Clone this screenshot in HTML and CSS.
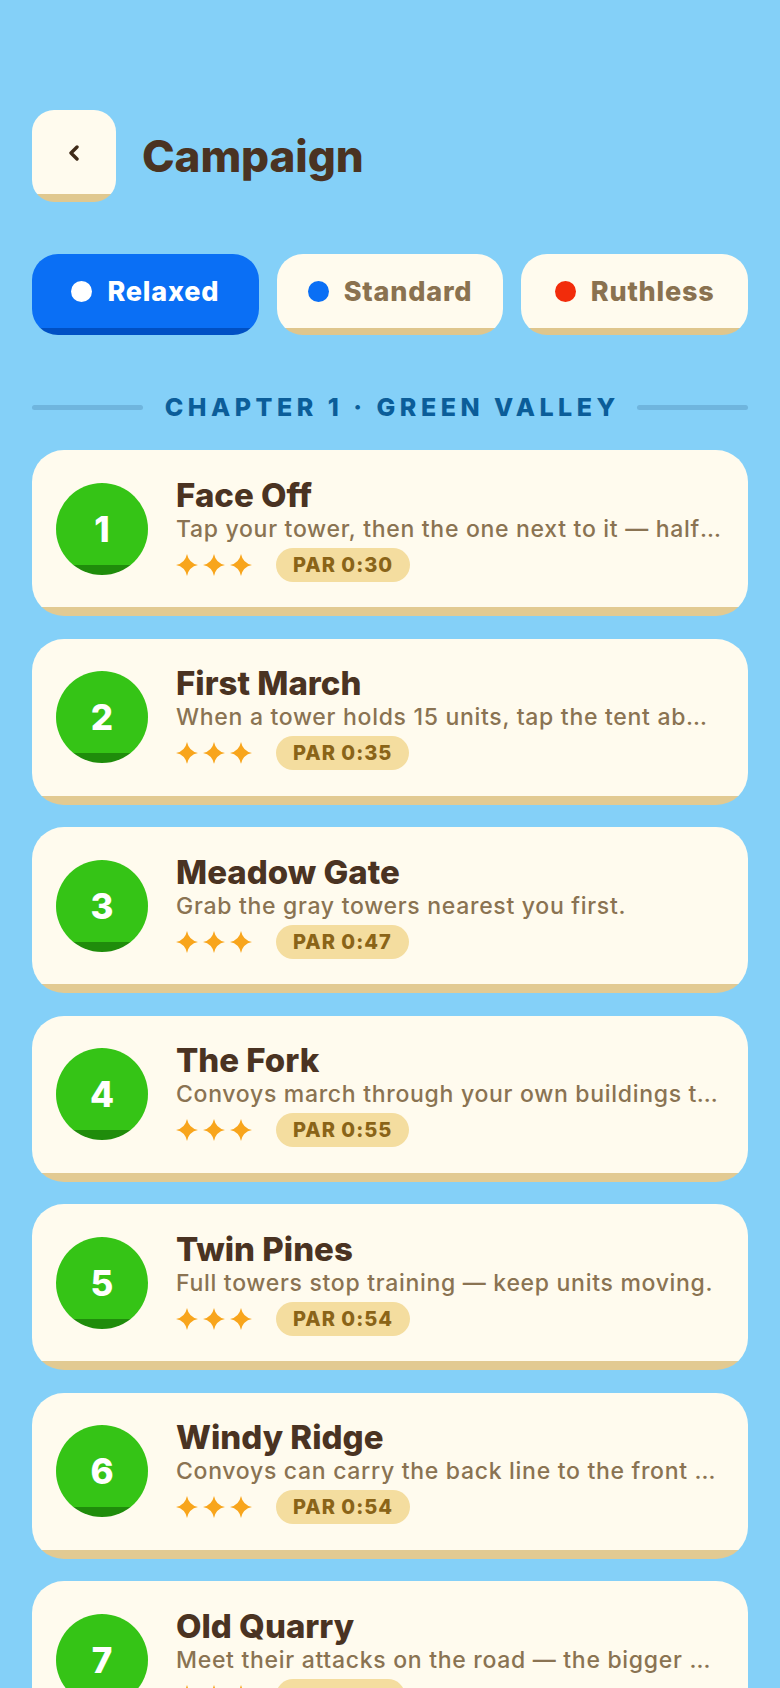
FILE: index.html
```html
<!DOCTYPE html>
<html lang="en">

<head>
    <meta charset="UTF-8">
    <meta name="viewport" content="width=device-width, initial-scale=1.0">
    <title>Campaign</title>
    <link rel="stylesheet" href="styles.css">
</head>

<body>
    <div class="screen">
        <header class="topbar">
            <button class="back-btn" aria-label="Back">
                <svg width="14" height="16" viewBox="0 0 14 16"><path d="M10 2 L4 8 L10 14" fill="none" stroke="#3f2a18" stroke-width="3.4" stroke-linecap="round" stroke-linejoin="round"/></svg>
            </button>
            <h1>Campaign</h1>
        </header>

        <div class="modes">
            <button class="mode active"><span class="dot dot-white"></span>Relaxed</button>
            <button class="mode"><span class="dot dot-blue"></span>Standard</button>
            <button class="mode"><span class="dot dot-red"></span>Ruthless</button>
        </div>

        <div class="chapter">
            <span class="chapter-line"></span>
            <span class="chapter-title">CHAPTER 1 · GREEN VALLEY</span>
            <span class="chapter-line"></span>
        </div>

        <div class="levels">
            <div class="level">
                <div class="level-num">1</div>
                <div class="level-info">
                    <div class="level-name">Face Off</div>
                    <div class="level-desc">Tap your tower, then the one next to it — half its units march over.</div>
                    <div class="level-meta">
                        <span class="stars"><svg viewBox="0 0 24 24"><path d="M12 0 Q14 10 24 12 Q14 14 12 24 Q10 14 0 12 Q10 10 12 0Z"/></svg><svg viewBox="0 0 24 24"><path d="M12 0 Q14 10 24 12 Q14 14 12 24 Q10 14 0 12 Q10 10 12 0Z"/></svg><svg viewBox="0 0 24 24"><path d="M12 0 Q14 10 24 12 Q14 14 12 24 Q10 14 0 12 Q10 10 12 0Z"/></svg></span>
                        <span class="par">PAR 0:30</span>
                    </div>
                </div>
            </div>
            <div class="level">
                <div class="level-num">2</div>
                <div class="level-info">
                    <div class="level-name">First March</div>
                    <div class="level-desc">When a tower holds 15 units, tap the tent above it to send a convoy.</div>
                    <div class="level-meta">
                        <span class="stars"><svg viewBox="0 0 24 24"><path d="M12 0 Q14 10 24 12 Q14 14 12 24 Q10 14 0 12 Q10 10 12 0Z"/></svg><svg viewBox="0 0 24 24"><path d="M12 0 Q14 10 24 12 Q14 14 12 24 Q10 14 0 12 Q10 10 12 0Z"/></svg><svg viewBox="0 0 24 24"><path d="M12 0 Q14 10 24 12 Q14 14 12 24 Q10 14 0 12 Q10 10 12 0Z"/></svg></span>
                        <span class="par">PAR 0:35</span>
                    </div>
                </div>
            </div>
            <div class="level">
                <div class="level-num">3</div>
                <div class="level-info">
                    <div class="level-name">Meadow Gate</div>
                    <div class="level-desc">Grab the gray towers nearest you first.</div>
                    <div class="level-meta">
                        <span class="stars"><svg viewBox="0 0 24 24"><path d="M12 0 Q14 10 24 12 Q14 14 12 24 Q10 14 0 12 Q10 10 12 0Z"/></svg><svg viewBox="0 0 24 24"><path d="M12 0 Q14 10 24 12 Q14 14 12 24 Q10 14 0 12 Q10 10 12 0Z"/></svg><svg viewBox="0 0 24 24"><path d="M12 0 Q14 10 24 12 Q14 14 12 24 Q10 14 0 12 Q10 10 12 0Z"/></svg></span>
                        <span class="par">PAR 0:47</span>
                    </div>
                </div>
            </div>
            <div class="level">
                <div class="level-num">4</div>
                <div class="level-info">
                    <div class="level-name">The Fork</div>
                    <div class="level-desc">Convoys march through your own buildings to reach the front.</div>
                    <div class="level-meta">
                        <span class="stars"><svg viewBox="0 0 24 24"><path d="M12 0 Q14 10 24 12 Q14 14 12 24 Q10 14 0 12 Q10 10 12 0Z"/></svg><svg viewBox="0 0 24 24"><path d="M12 0 Q14 10 24 12 Q14 14 12 24 Q10 14 0 12 Q10 10 12 0Z"/></svg><svg viewBox="0 0 24 24"><path d="M12 0 Q14 10 24 12 Q14 14 12 24 Q10 14 0 12 Q10 10 12 0Z"/></svg></span>
                        <span class="par">PAR 0:55</span>
                    </div>
                </div>
            </div>
            <div class="level">
                <div class="level-num">5</div>
                <div class="level-info">
                    <div class="level-name">Twin Pines</div>
                    <div class="level-desc">Full towers stop training — keep units moving.</div>
                    <div class="level-meta">
                        <span class="stars"><svg viewBox="0 0 24 24"><path d="M12 0 Q14 10 24 12 Q14 14 12 24 Q10 14 0 12 Q10 10 12 0Z"/></svg><svg viewBox="0 0 24 24"><path d="M12 0 Q14 10 24 12 Q14 14 12 24 Q10 14 0 12 Q10 10 12 0Z"/></svg><svg viewBox="0 0 24 24"><path d="M12 0 Q14 10 24 12 Q14 14 12 24 Q10 14 0 12 Q10 10 12 0Z"/></svg></span>
                        <span class="par">PAR 0:54</span>
                    </div>
                </div>
            </div>
            <div class="level">
                <div class="level-num">6</div>
                <div class="level-info">
                    <div class="level-name">Windy Ridge</div>
                    <div class="level-desc">Convoys can carry the back line to the front in a single trip.</div>
                    <div class="level-meta">
                        <span class="stars"><svg viewBox="0 0 24 24"><path d="M12 0 Q14 10 24 12 Q14 14 12 24 Q10 14 0 12 Q10 10 12 0Z"/></svg><svg viewBox="0 0 24 24"><path d="M12 0 Q14 10 24 12 Q14 14 12 24 Q10 14 0 12 Q10 10 12 0Z"/></svg><svg viewBox="0 0 24 24"><path d="M12 0 Q14 10 24 12 Q14 14 12 24 Q10 14 0 12 Q10 10 12 0Z"/></svg></span>
                        <span class="par">PAR 0:54</span>
                    </div>
                </div>
            </div>
            <div class="level">
                <div class="level-num">7</div>
                <div class="level-info">
                    <div class="level-name">Old Quarry</div>
                    <div class="level-desc">Meet their attacks on the road — the bigger army wins the clash.</div>
                    <div class="level-meta">
                        <span class="stars"><svg viewBox="0 0 24 24"><path d="M12 0 Q14 10 24 12 Q14 14 12 24 Q10 14 0 12 Q10 10 12 0Z"/></svg><svg viewBox="0 0 24 24"><path d="M12 0 Q14 10 24 12 Q14 14 12 24 Q10 14 0 12 Q10 10 12 0Z"/></svg><svg viewBox="0 0 24 24"><path d="M12 0 Q14 10 24 12 Q14 14 12 24 Q10 14 0 12 Q10 10 12 0Z"/></svg></span>
                        <span class="par">PAR 1:02</span>
                    </div>
                </div>
            </div>
        </div>
    </div>
</body>

</html>
```

FILE: styles.css
```css
body {
    margin: 0;
    padding: 0;
    background-color: #84d0f8;
    font-family: 'Inter', 'Noto Sans', sans-serif;
    color: #4a3322;
    overflow: hidden;
}

.screen {
    padding: 110px 32px 0;
}

button {
    font-family: inherit;
    border: none;
    cursor: pointer;
    padding: 0;
}

/* header */
.topbar {
    display: flex;
    align-items: center;
    gap: 26px;
}

.back-btn {
    width: 84px;
    height: 92px;
    border-radius: 22px;
    background: linear-gradient(to top, #e0c88f 8px, #fffbee 8px);
    display: flex;
    align-items: center;
    justify-content: center;
    padding-bottom: 6px;
}

h1 {
    margin: 0;
    font-size: 44px;
    font-weight: 800;
    color: #4a3322;
    letter-spacing: -0.1px;
}

/* difficulty */
.modes {
    margin-top: 52px;
    display: grid;
    grid-template-columns: repeat(3, 1fr);
    gap: 18px;
}

.mode {
    height: 81px;
    border-radius: 26px;
    background: linear-gradient(to top, #dfc68d 7px, #fffbee 7px);
    color: #8a7250;
    font-size: 27px;
    font-weight: 800;
    letter-spacing: 0.8px;
    display: flex;
    align-items: center;
    justify-content: center;
    gap: 15px;
    padding-bottom: 7px;
}

.mode.active {
    background: linear-gradient(to top, #0050c4 7px, #0a6ff5 7px);
    color: #fff;
}

.dot {
    width: 21px;
    height: 21px;
    border-radius: 50%;
}

.dot-white { background-color: #fff; }
.dot-blue { background-color: #0a6ff5; }
.dot-red { background-color: #f22c0b; }

/* chapter */
.chapter {
    margin-top: 57px;
    display: flex;
    align-items: center;
    gap: 22px;
}

.chapter-line {
    flex: 1;
    height: 5px;
    border-radius: 3px;
    background-color: #6fb5de;
}

.chapter-title {
    font-size: 25px;
    line-height: 30px;
    font-weight: 800;
    letter-spacing: 4.5px;
    margin-right: -4.5px;
    color: #0b5d99;
}

/* levels */
.levels {
    margin-top: 28px;
    display: flex;
    flex-direction: column;
    gap: 22.5px;
}

.level {
    height: 166px;
    box-sizing: border-box;
    border-radius: 32px;
    background: linear-gradient(to top, #e2ca92 9px, #fffbee 9px);
    padding: 0 27px 9px 24px;
    display: flex;
    align-items: center;
    gap: 28px;
}

.level-num {
    flex: none;
    width: 92px;
    height: 92px;
    border-radius: 50%;
    background: linear-gradient(to bottom, #35c416 89%, #1f8c0b 89%);
    color: #fff;
    font-size: 35px;
    font-weight: 800;
    display: flex;
    align-items: center;
    justify-content: center;
}

.level-info {
    flex: 1;
    min-width: 0;
}

.level-name {
    font-size: 33px;
    line-height: 38px;
    font-weight: 800;
    color: #4a3322;
}

.level-desc {
    font-size: 23px;
    line-height: 30px;
    font-weight: 500;
    letter-spacing: 0.7px;
    color: #8a7352;
    white-space: nowrap;
    overflow: hidden;
    text-overflow: ellipsis;
}

.level-meta {
    margin-top: 4px;
    display: flex;
    align-items: center;
    gap: 24px;
}

.stars {
    display: flex;
    gap: 5px;
}

.stars svg {
    width: 22px;
    height: 22px;
    fill: #f8a51c;
}

.par {
    height: 34px;
    padding: 0 17px;
    border-radius: 17px;
    background-color: #f4dd9f;
    color: #8a6418;
    font-size: 20px;
    font-weight: 800;
    letter-spacing: 1px;
    display: flex;
    align-items: center;
}
```
